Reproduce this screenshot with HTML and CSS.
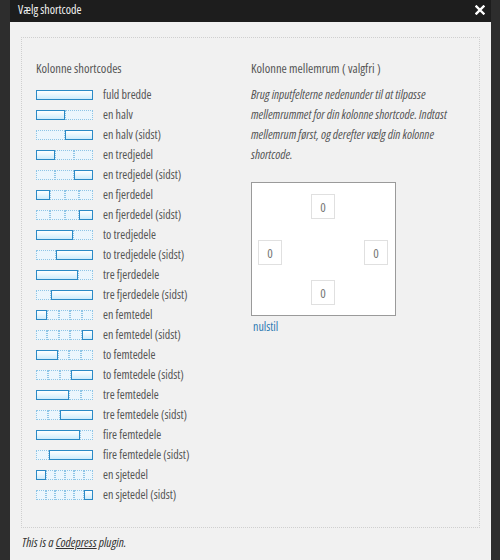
FILE: index.html
```html
<!DOCTYPE html>
<html lang="da">
<head>
<meta charset="utf-8">
<title>Vælg shortcode</title>
<link rel="stylesheet" href="styles.css">
</head>
<body>
<div class="backdrop">
  <div class="modal">
    <div class="modal-head">
      <span class="modal-title">Vælg shortcode</span>
      <svg class="close" width="10" height="10" viewBox="0 0 10 10"><path d="M1.5 1.5 L8.5 8.5 M8.5 1.5 L1.5 8.5" stroke="#fff" stroke-width="2.4" stroke-linecap="square"/></svg>
    </div>
    <div class="modal-body">
      <div class="panel">
        <div class="col-left">
          <h3 class="heading">Kolonne shortcodes</h3>
          <ul class="codes">
            <li class="code"><span class="icon"><i class="on f1"></i></span><span class="label">fuld bredde</span></li>
            <li class="code"><span class="icon"><i class="on f1"></i><i class="off f1"></i></span><span class="label">en halv</span></li>
            <li class="code"><span class="icon"><i class="off f1"></i><i class="on f1"></i></span><span class="label">en halv (sidst)</span></li>
            <li class="code"><span class="icon"><i class="on f1"></i><i class="off f1"></i><i class="off f1"></i></span><span class="label">en tredjedel</span></li>
            <li class="code"><span class="icon"><i class="off f1"></i><i class="off f1"></i><i class="on f1"></i></span><span class="label">en tredjedel (sidst)</span></li>
            <li class="code"><span class="icon"><i class="on f1"></i><i class="off f1"></i><i class="off f1"></i><i class="off f1"></i></span><span class="label">en fjerdedel</span></li>
            <li class="code"><span class="icon"><i class="off f1"></i><i class="off f1"></i><i class="off f1"></i><i class="on f1"></i></span><span class="label">en fjerdedel (sidst)</span></li>
            <li class="code"><span class="icon"><i class="on f2"></i><i class="off f1"></i></span><span class="label">to tredjedele</span></li>
            <li class="code"><span class="icon"><i class="off f1"></i><i class="on f2"></i></span><span class="label">to tredjedele (sidst)</span></li>
            <li class="code"><span class="icon"><i class="on f3"></i><i class="off f1"></i></span><span class="label">tre fjerdedele</span></li>
            <li class="code"><span class="icon"><i class="off f1"></i><i class="on f3"></i></span><span class="label">tre fjerdedele (sidst)</span></li>
            <li class="code"><span class="icon"><i class="on f1"></i><i class="off f1"></i><i class="off f1"></i><i class="off f1"></i><i class="off f1"></i></span><span class="label">en femtedel</span></li>
            <li class="code"><span class="icon"><i class="off f1"></i><i class="off f1"></i><i class="off f1"></i><i class="off f1"></i><i class="on f1"></i></span><span class="label">en femtedel (sidst)</span></li>
            <li class="code"><span class="icon"><i class="on f2"></i><i class="off f1"></i><i class="off f1"></i><i class="off f1"></i></span><span class="label">to femtedele</span></li>
            <li class="code"><span class="icon"><i class="off f1"></i><i class="off f1"></i><i class="off f1"></i><i class="on f2"></i></span><span class="label">to femtedele (sidst)</span></li>
            <li class="code"><span class="icon"><i class="on f3"></i><i class="off f1"></i><i class="off f1"></i></span><span class="label">tre femtedele</span></li>
            <li class="code"><span class="icon"><i class="off f1"></i><i class="off f1"></i><i class="on f3"></i></span><span class="label">tre femtedele (sidst)</span></li>
            <li class="code"><span class="icon"><i class="on f4"></i><i class="off f1"></i></span><span class="label">fire femtedele</span></li>
            <li class="code"><span class="icon"><i class="off f1"></i><i class="on f4"></i></span><span class="label">fire femtedele (sidst)</span></li>
            <li class="code"><span class="icon"><i class="on f1"></i><i class="off f1"></i><i class="off f1"></i><i class="off f1"></i><i class="off f1"></i><i class="off f1"></i></span><span class="label">en sjetedel</span></li>
            <li class="code"><span class="icon"><i class="off f1"></i><i class="off f1"></i><i class="off f1"></i><i class="off f1"></i><i class="off f1"></i><i class="on f1"></i></span><span class="label">en sjetedel (sidst)</span></li>
          </ul>
        </div>
        <div class="col-right">
          <h3 class="heading">Kolonne mellemrum ( valgfri )</h3>
          <p class="desc">Brug inputfelterne nedenunder til at tilpasse mellemrummet for din kolonne shortcode. Indtast mellemrum først, og derefter vælg din kolonne shortcode.</p>
          <div class="spacing">
            <input class="sp sp-top" type="text" value="0">
            <input class="sp sp-left" type="text" value="0">
            <input class="sp sp-right" type="text" value="0">
            <input class="sp sp-bottom" type="text" value="0">
          </div>
          <a class="reset" href="#">nulstil</a>
        </div>
      </div>
      <p class="footer">This is a <a href="#">Codepress</a> plugin.</p>
    </div>
  </div>
</div>
</body>
</html>
```

FILE: styles.css
```css
html, body {
  margin: 0;
  padding: 0;
  height: 100%;
  overflow: hidden;
}
body {
  background: #2d2d2d;
  font-family: "Open Sans", "Liberation Sans", sans-serif;
  font-stretch: 80%;
  font-size: 12px;
  color: #555;
}
.backdrop {
  padding-left: 10px;
}
.modal {
  width: 481px;
  height: 560px;
  background: #f1f1f1;
  display: flex;
  flex-direction: column;
}
.modal-head {
  height: 22px;
  background: #1d1d1d;
  display: flex;
  align-items: center;
  justify-content: space-between;
  padding: 0 6px 0 8px;
}
.modal-title {
  color: #f2f2f2;
  font-size: 12px;
  line-height: 18px;
  margin-top: -3px;
}
.close {
  display: block;
  margin-top: -2px;
}
.modal-body {
  padding: 15px 11px 0 11px;
}
.panel {
  border: 1px dotted #cfcfcf;
  height: 489px;
  display: flex;
  padding: 0 14px;
}
.heading {
  margin: 24px 0 0;
  font-weight: normal;
  font-size: 12.6px;
  line-height: 14px;
  color: #555;
}
.col-left {
  width: 215px;
}
.codes {
  list-style: none;
  margin: 9px 0 0;
  padding: 0;
}
.code {
  height: 20px;
  display: flex;
  align-items: center;
}
.icon {
  width: 57px;
  height: 10px;
  display: flex;
  margin-right: 10px;
}
.icon i {
  display: block;
  box-sizing: border-box;
  height: 10px;
  min-width: 0;
  flex-basis: 0;
}
.f1 { flex-grow: 1; }
.f2 { flex-grow: 2; }
.f3 { flex-grow: 3; }
.f4 { flex-grow: 4; }
.on {
  border: 1px solid #2b8ac6;
  background: linear-gradient(#ffffff, #cdebfb);
}
.off {
  border: 1px dotted #8ec5e6;
  background: #ebf6fd;
}
.label {
  line-height: 14px;
}
.col-right {
  flex: 1;
}
.desc {
  margin: 9px 0 0;
  font-style: italic;
  font-size: 12.5px;
  line-height: 20px;
  width: 210px;
}
.spacing {
  margin-top: 17px;
  width: 143px;
  height: 132px;
  background: #fff;
  border: 1px solid #9a9a9a;
  box-sizing: content-box;
  display: grid;
  grid-template-columns: auto 1fr auto;
  grid-template-rows: auto 1fr auto;
  padding: 0;
}
.sp {
  width: 24px;
  height: 25px;
  box-sizing: border-box;
  border: 1px solid #e0e0e0;
  background: #fff;
  text-align: center;
  font-family: "Open Sans", "Liberation Sans", sans-serif;
  font-stretch: 80%;
  font-size: 13px;
  color: #777;
  padding: 0;
  outline: none;
}
.sp-top { grid-column: 2; grid-row: 1; justify-self: center; margin-top: 11px; }
.sp-left { grid-column: 1; grid-row: 2; align-self: center; margin-left: 6px; margin-top: 6px; }
.sp-right { grid-column: 3; grid-row: 2; align-self: center; margin-right: 7px; margin-top: 6px; }
.sp-bottom { grid-column: 2; grid-row: 3; justify-self: center; margin-bottom: 10px; }
.reset {
  display: inline-block;
  margin: 4px 0 0 2px;
  color: #2e7bb3;
  text-decoration: none;
  line-height: 14px;
}
.footer {
  margin: 8px 0 0 1px;
  font-style: italic;
  font-size: 12.6px;
  line-height: 14px;
  color: #333;
}
.footer a {
  color: #333;
  text-decoration: underline;
}
```
